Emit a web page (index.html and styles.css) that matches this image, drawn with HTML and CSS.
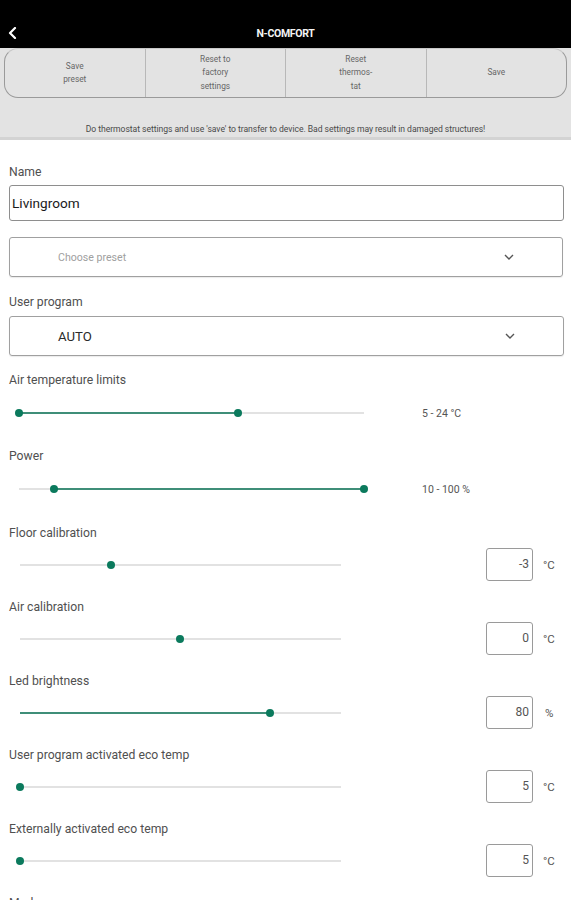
FILE: index.html
```html
<!DOCTYPE html>
<html>
<head>
<meta charset="utf-8">
<link rel="stylesheet" href="styles.css">
</head>
<body>
<header class="appbar">
  <svg class="back" width="10" height="12" viewBox="0 0 10 12"><path d="M7 1 L2 6 L7 11" fill="none" stroke="#fff" stroke-width="2.2" stroke-linecap="round" stroke-linejoin="round"/></svg>
  <div class="title">N-COMFORT</div>
</header>
<section class="toolbar">
  <div class="btn-group">
    <div class="btn">Save<br>preset</div>
    <div class="btn">Reset to<br>factory<br>settings</div>
    <div class="btn">Reset<br>thermos-<br>tat</div>
    <div class="btn">Save</div>
  </div>
  <p class="notice">Do thermostat settings and use 'save' to transfer to device. Bad settings may result in damaged structures!</p>
</section>
<main class="form">
  <div class="label">Name</div>
  <div class="text-input">Livingroom</div>

  <div class="select preset">
    <span class="placeholder">Choose preset</span>
    <svg class="chev" width="10" height="6" viewBox="0 0 10 6"><path d="M1 1 L5 5 L9 1" fill="none" stroke="#555" stroke-width="1.4"/></svg>
  </div>

  <div class="label lbl-program">User program</div>
  <div class="select program">
    <span class="sel-value">AUTO</span>
    <svg class="chev" width="10" height="6" viewBox="0 0 10 6"><path d="M1 1 L5 5 L9 1" fill="none" stroke="#555" stroke-width="1.4"/></svg>
  </div>

  <div class="field range-field first">
    <div class="label">Air temperature limits</div>
    <div class="row range-row">
      <div class="track wide">
        <div class="fill" style="left:0%;width:63.5%"></div>
        <div class="thumb" style="left:0%"></div>
        <div class="thumb" style="left:63.5%"></div>
      </div>
      <div class="range-value">5 - 24 °C</div>
    </div>
  </div>

  <div class="field range-field">
    <div class="label">Power</div>
    <div class="row range-row">
      <div class="track wide">
        <div class="fill" style="left:10%;width:90%"></div>
        <div class="thumb" style="left:10%"></div>
        <div class="thumb" style="left:100%"></div>
      </div>
      <div class="range-value">10 - 100 %</div>
    </div>
  </div>

  <div class="field">
    <div class="label">Floor calibration</div>
    <div class="row">
      <div class="track narrow">
        <div class="thumb" style="left:28.3%"></div>
      </div>
      <div class="num">-3</div>
      <div class="unit">°C</div>
    </div>
  </div>

  <div class="field">
    <div class="label">Air calibration</div>
    <div class="row">
      <div class="track narrow">
        <div class="thumb" style="left:49.8%"></div>
      </div>
      <div class="num">0</div>
      <div class="unit">°C</div>
    </div>
  </div>

  <div class="field">
    <div class="label">Led brightness</div>
    <div class="row">
      <div class="track narrow">
        <div class="fill" style="left:0%;width:78%"></div>
        <div class="thumb" style="left:78%"></div>
      </div>
      <div class="num">80</div>
      <div class="unit pct">%</div>
    </div>
  </div>

  <div class="field">
    <div class="label">User program activated eco temp</div>
    <div class="row">
      <div class="track narrow">
        <div class="thumb" style="left:0%"></div>
      </div>
      <div class="num">5</div>
      <div class="unit">°C</div>
    </div>
  </div>

  <div class="field">
    <div class="label">Externally activated eco temp</div>
    <div class="row">
      <div class="track narrow">
        <div class="thumb" style="left:0%"></div>
      </div>
      <div class="num">5</div>
      <div class="unit">°C</div>
    </div>
  </div>

  <div class="field">
    <div class="label">Mode</div>
  </div>
</main>
</body>
</html>
```

FILE: styles.css
```css
* { box-sizing: border-box; }
html, body { margin: 0; padding: 0; }
body {
  font-family: Roboto, "Liberation Sans", sans-serif;
  background: #fff;
  color: #444;
  width: 571px;
  overflow: hidden;
}

.appbar {
  background: #000;
  height: 48px;
  padding-top: 20px;
  display: flex;
  align-items: center;
  justify-content: center;
  position: relative;
}
.appbar .back {
  position: absolute;
  left: 8px;
  top: 27px;
}
.appbar .title {
  color: #f4f4f4;
  font-weight: 700;
  font-size: 10.5px;
  letter-spacing: -0.3px;
  line-height: 28px;
}

.toolbar {
  background: #e3e3e3;
  padding: 0 4px;
  height: 140px;
  margin-top: -48px;
  padding-top: 48px;
  border-bottom: 3px solid #d3d3d3;
}
.btn-group {
  display: flex;
  height: 50px;
  border: 1px solid #9a9a9a;
  border-top-color: #c8c8c8;
  border-radius: 14px;
}
.btn {
  flex: 1;
  display: flex;
  align-items: center;
  justify-content: center;
  text-align: center;
  font-size: 8.3px;
  line-height: 13.5px;
  color: #666;
  border-left: 1px solid #b8b8b8;
}
.btn:first-child { border-left: none; }

.notice {
  margin: 26px 0 0;
  text-align: center;
  font-size: 8.6px;
  line-height: 10px;
  color: #4a4a4a;
  letter-spacing: -0.05px;
  white-space: nowrap;
}

.form {
  padding: 25px 7px 0 9px;
}
.label {
  font-size: 12.2px;
  line-height: 14px;
  color: #505050;
}
.text-input {
  margin-top: 6px;
  height: 36px;
  border: 1px solid #8e8e8e;
  border-radius: 3px;
  padding-left: 2px;
  font-size: 13.6px;
  color: #1a1a1a;
  display: flex;
  align-items: center;
}
.select {
  height: 40px;
  border: 1px solid #a0a0a0;
  border-radius: 3px;
  display: flex;
  align-items: center;
  padding-left: 48px;
  padding-right: 48px;
  box-shadow: 0 1px 1px rgba(0,0,0,0.08);
}
.select .chev { margin-left: auto; }
.preset { margin-top: 16px; margin-right: 1px; }
.placeholder { font-size: 10.6px; color: #a0a0a0; }
.lbl-program { margin-top: 18px; }
.program { margin-top: 7px; }
.sel-value { font-size: 13.2px; color: #2a2a2a; }

.field { margin-top: 19px; }
.field.first { margin-top: 17px; }
.range-field + .field { margin-top: 19px; }
.range-field + .range-field { margin-top: 18px; }

.row {
  margin-top: 8px;
  height: 33px;
  display: flex;
  align-items: center;
}
.range-row { height: 36px; }

.track {
  position: relative;
  height: 2px;
  background: #e2e2e2;
}
.track.wide { margin-left: 10px; width: 345px; }
.track.narrow { margin-left: 11px; width: 321px; }
.fill {
  position: absolute;
  top: 0;
  height: 2px;
  background: #3f8e78;
}
.thumb {
  position: absolute;
  top: 50%;
  width: 8px;
  height: 8px;
  margin: -4px 0 0 -4px;
  border-radius: 50%;
  background: #0b7a5d;
}
.range-value {
  margin-left: 58px;
  font-size: 10.5px;
  color: #555;
}

.num {
  margin-left: auto;
  width: 47px;
  height: 33px;
  border: 1px solid #9a9a9a;
  border-radius: 3px;
  text-align: right;
  padding-right: 3px;
  font-size: 12px;
  line-height: 31px;
  color: #555;
}
.unit {
  width: 31px;
  padding-left: 10px;
  font-size: 11.5px;
  color: #555;
}
.unit.pct { padding-left: 12px; }
```
